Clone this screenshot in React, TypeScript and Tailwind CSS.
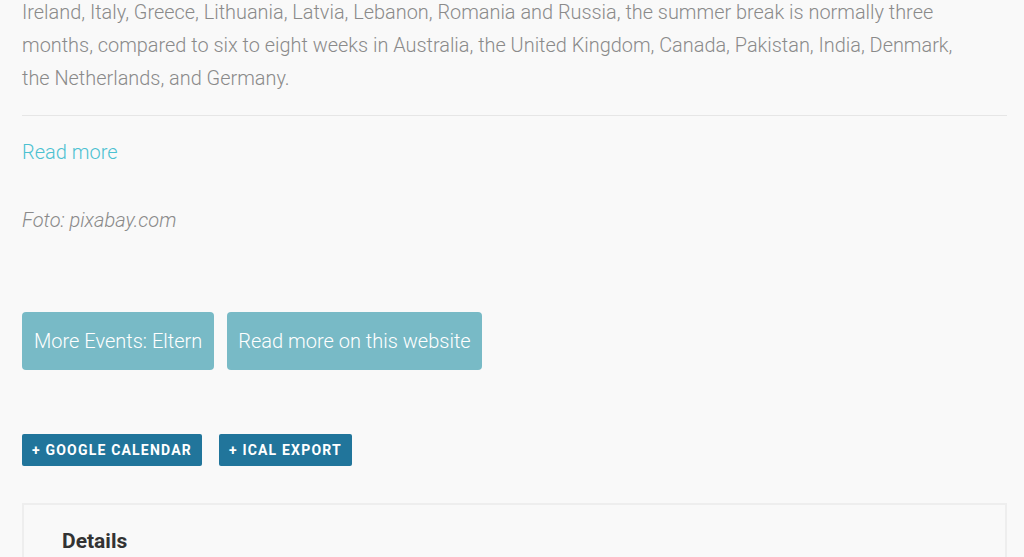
export default function App() {
  return (
    <div
      className="min-h-[557px] overflow-hidden bg-[#f9f9f9] pl-[22px] pr-[17px]"
      style={{ fontFamily: "Roboto, 'Liberation Sans', sans-serif" }}
    >
      <p className="-mt-[4px] text-[19.9px] leading-[33px] font-light text-[#8a8a8a]">
        Ireland, Italy, Greece, Lithuania, Latvia, Lebanon, Romania and Russia, the summer break is normally three
        <br />
        months, compared to six to eight weeks in Australia, the United Kingdom, Canada, Pakistan, India, Denmark,
        <br />
        the Netherlands, and Germany.
      </p>

      <hr className="mt-[20px] border-0 border-t border-[#e6e6e6]" />

      <a href="#" className="mt-[22px] block text-[20px] leading-[28px] font-light text-[#4cc1d1]">
        Read more
      </a>

      <p className="mt-[40px] text-[20px] leading-[28px] font-light italic text-[#8a8a8a]">Foto: pixabay.com</p>

      <div className="mt-[78px] flex gap-[13px]">
        <a href="#" className="flex h-[58px] items-center rounded-[4px] bg-[#78bac6] px-[12px] text-[20px] font-light text-white">
          More Events: Eltern
        </a>
        <a href="#" className="flex h-[58px] items-center rounded-[4px] bg-[#78bac6] px-[11px] text-[20px] font-light text-white">
          Read more on this website
        </a>
      </div>

      <div className="mt-[64px] flex gap-[17px]">
        <a href="#" className="flex h-[32px] items-center rounded-[2px] bg-[#21759b] px-[10px] text-[14px] font-bold tracking-[0.085em] text-white">
          + GOOGLE CALENDAR
        </a>
        <a href="#" className="flex h-[32px] items-center rounded-[2px] bg-[#21759b] px-[10px] text-[14px] font-bold tracking-[0.085em] text-white">
          + ICAL EXPORT
        </a>
      </div>

      <div className="mt-[37px] border-2 border-b-0 border-[#eeeeee] px-[38px] pt-[22px] pb-[20px]">
        <h2 className="text-[21px] leading-[28px] font-bold text-[#333333]">Details</h2>
      </div>
    </div>
  );
}
